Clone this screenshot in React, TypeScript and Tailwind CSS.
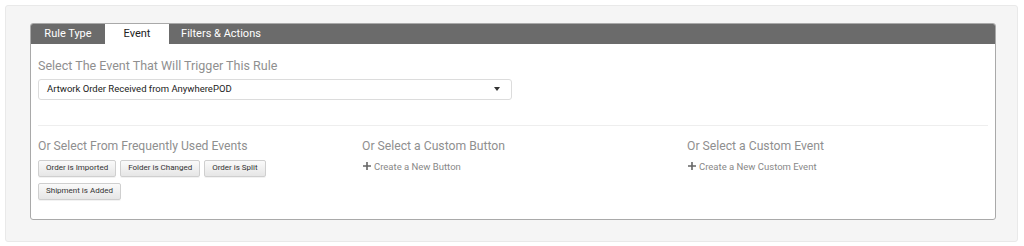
const frequent = ["Order is Imported", "Folder is Changed", "Order is Split", "Shipment is Added"];

function EventButton({ label }: { label: string }) {
  return (
    <button
      type="button"
      className="h-[17px] px-[7px] text-[8px] leading-none text-[#333] bg-gradient-to-b from-[#fafafa] to-[#e6e6e6] border border-[#cfcfcf] rounded-[2px] shadow-[0_1px_0_rgba(0,0,0,0.05)]"
    >
      {label}
    </button>
  );
}

function CreateLink({ label }: { label: string }) {
  return (
    <div className="mt-[10px] flex items-center gap-[3px] text-[9.5px] leading-none text-[#888]">
      <svg width="8" height="8" viewBox="0 0 8 8" className="ml-[1px]">
        <path d="M4 0v8M0 4h8" stroke="#666" strokeWidth="1.6" />
      </svg>
      <span>{label}</span>
    </div>
  );
}

export default function App() {
  return (
    <div className="w-[1024px] h-[246px] bg-white p-[5px] font-['Roboto',sans-serif]">
      <div className="h-[237px] w-[1013px] bg-[#f5f5f5] border border-[#e9e9e9] rounded-[3px] pt-[17px] pl-[24px]">
        <div className="w-[966px] h-[197px] bg-white border border-[#a9a9a9] rounded-[3px] overflow-hidden">
          <div className="flex h-[20px] bg-[#6b6b6b] text-[11px]">
            <div className="w-[74px] flex items-center justify-center text-white">Rule Type</div>
            <div className="w-[64px] flex items-center justify-center bg-white text-[#222]">Event</div>
            <div className="w-[104px] flex items-center justify-center text-white">Filters &amp; Actions</div>
          </div>
          <div className="px-[7px] pt-[16px]">
            <h2 className="text-[12.5px] text-[#8f8f8f] leading-none">Select The Event That Will Trigger This Rule</h2>
            <div className="mt-[6px] w-[474px] h-[21px] border border-[#dcdcdc] rounded-[3px] flex items-center justify-between pl-[8px] pr-[11px]">
              <span className="text-[9.5px] text-[#222]">Artwork Order Received from AnywherePOD</span>
              <span className="w-0 h-0 border-l-[3.5px] border-r-[3.5px] border-t-[4px] border-l-transparent border-r-transparent border-t-[#333]" />
            </div>
            <div className="mt-[25px] border-t border-[#eeeeee]" />
            <div className="grid grid-cols-[324px_325px_1fr] pt-[14px]">
              <div>
                <h3 className="text-[12.2px] text-[#8f8f8f] leading-none">Or Select From Frequently Used Events</h3>
                <div className="mt-[8px] flex flex-wrap gap-x-[4px] gap-y-[6px] w-[240px]">
                  {frequent.map((f) => (
                    <EventButton key={f} label={f} />
                  ))}
                </div>
              </div>
              <div>
                <h3 className="text-[12.2px] text-[#8f8f8f] leading-none">Or Select a Custom Button</h3>
                <CreateLink label="Create a New Button" />
              </div>
              <div>
                <h3 className="text-[12.2px] text-[#8f8f8f] leading-none">Or Select a Custom Event</h3>
                <CreateLink label="Create a New Custom Event" />
              </div>
            </div>
          </div>
        </div>
      </div>
    </div>
  );
}
